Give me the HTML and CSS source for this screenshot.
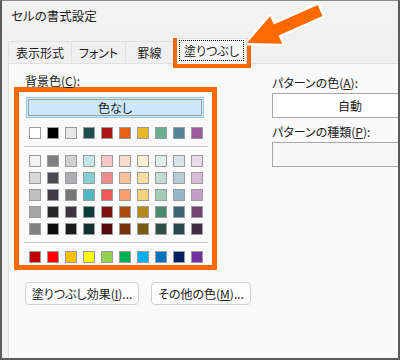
FILE: index.html
```html
<!DOCTYPE html>
<html lang="ja">
<head>
    <meta charset="UTF-8">
    <title>セルの書式設定</title>
    <link rel="stylesheet" href="styles.css">
</head>
<body>
    <div class="window">
        <div class="titlebar">セルの書式設定</div>

        <div class="tabstrip">
            <div class="tab tab-number">表示形式</div>
            <div class="tab tab-font">フォント</div>
            <div class="tab tab-border">罫線</div>
            <div class="tab tab-active"><span class="focus">塗りつぶし</span></div>
        </div>

        <div class="pane">
            <div class="col-left">
                <div class="label label-bg">背景色(<u>C</u>):</div>
                <div class="picker">
                    <div class="none-btn"><span>色なし</span></div>
                    <div class="swatch-row" id="themeRow"></div>
                    <div class="sep"></div>
                    <div class="swatch-grid" id="tintGrid"></div>
                    <div class="sep"></div>
                    <div class="swatch-row" id="standardRow"></div>
                </div>
                <div class="buttons">
                    <button class="btn btn-effect">塗りつぶし効果(<u>I</u>)...</button>
                    <button class="btn btn-more">その他の色(<u>M</u>)...</button>
                </div>
            </div>

            <div class="col-right">
                <div class="label">パターンの色(<u>A</u>):</div>
                <div class="combo">自動</div>
                <div class="label label-second">パターンの種類(<u>P</u>):</div>
                <div class="combo combo-empty"></div>
            </div>
        </div>
    </div>

    <!-- annotation -->
    <div class="callout"></div>
    <svg class="arrow" width="400" height="80" viewBox="0 0 400 80">
        <polygon points="247,43 282.3,43.7 278.6,35.5 322.5,15.9 317.7,4.9 273.8,24.5 270.1,16.3"
                 fill="#ff6a00" stroke="#ffffff" stroke-width="5" stroke-linejoin="round" paint-order="stroke"/>
    </svg>

    <script>
        const theme = ['#ffffff', '#000000', '#e8e8e8', '#1d4d4d', '#ad1515', '#eb6015', '#e8b828', '#6aaf90', '#528399', '#9b5a9c'];
        const tints = [
            ['#f2f2f2', '#7f7f7f', '#d0d0d0', '#c4e6e6', '#f7c7c7', '#fbdccc', '#faf0d3', '#e0eee8', '#dae5eb', '#ebdceb'],
            ['#d8d8d8', '#4a4a50', '#aeaeb2', '#85cfd3', '#f08c8c', '#f9c19e', '#f5e0a2', '#c4ddd2', '#b9cdd8', '#d8bcd8'],
            ['#bfbfbf', '#403b45', '#767676', '#4fb9c3', '#ee5a5a', '#f8a070', '#f0d27a', '#a2cbb8', '#94b5c8', '#c59cc6'],
            ['#a6a6a6', '#262626', '#3b3640', '#0e3a3c', '#7e1010', '#ad4b0e', '#b48a1c', '#4c8a6c', '#3c6378', '#744476'],
            ['#808080', '#0d0d0d', '#1a1a1a', '#13302f', '#560a0a', '#773208', '#775c12', '#2f4f46', '#284a4d', '#3d2f40']
        ];
        const standard = ['#c00000', '#ff0000', '#ffc000', '#ffff00', '#92d050', '#00b050', '#00b0f0', '#0070c0', '#002060', '#7030a0'];

        function fillRow(row, colors) {
            colors.forEach(c => {
                const s = document.createElement('span');
                s.className = 'swatch';
                s.style.background = c;
                row.appendChild(s);
            });
        }

        fillRow(document.getElementById('themeRow'), theme);
        const grid = document.getElementById('tintGrid');
        tints.forEach(colors => {
            const row = document.createElement('div');
            row.className = 'swatch-row';
            fillRow(row, colors);
            grid.appendChild(row);
        });
        fillRow(document.getElementById('standardRow'), standard);
    </script>
</body>
</html>
```

FILE: styles.css
```css
body {
    margin: 0;
    font-family: "Noto Sans CJK JP", "Noto Sans", sans-serif;
    font-feature-settings: "palt";
    font-size: 12px;
    color: #1b1b1b;
}
u {
    text-decoration-thickness: 1px;
    text-underline-offset: 1px;
}
.window {
    width: 400px;
    height: 360px;
    box-sizing: border-box;
    border: 2px solid #5b5b5b;
    border-top: 1px solid #8a8a8a;
    background: #f0f0f0;
    display: flex;
    flex-direction: column;
    overflow: hidden;
}
.titlebar {
    height: 30px;
    line-height: 29px;
    padding-left: 9px;
    background: #f3f3f3;
    font-size: 12.5px;
}

/* tabs */
.tabstrip {
    display: flex;
    align-items: flex-end;
    height: 22px;
    padding: 10px 0 0 6px;
}
.tab {
    height: 22px;
    box-sizing: border-box;
    border: 1px solid #e0e0e0;
    border-bottom: none;
    line-height: 21px;
    text-align: center;
}
.tab + .tab { border-left: none; }
.tab-number { width: 64px; }
.tab-font { width: 54px; }
.tab-border { width: 48px; }
.tab-active {
    position: relative;
    z-index: 1;
    width: 70px;
    height: 26px;
    margin: 0 0 -1px 3px;
    border-left: 1px solid #e0e0e0;
    background: #fafafa;
    line-height: 24px;
}
.focus {
    outline: 1px dotted #000;
    outline-offset: 0;
    padding: 1px 4px;
}

/* page */
.pane {
    flex: 1;
    display: flex;
    margin-left: 6px;
    background: #fafafa;
    border-top: 1px solid #e0e0e0;
    border-left: 1px solid #e0e0e0;
}
.label {
    line-height: 14px;
}
.col-left {
    flex-shrink: 0;
    width: 203px;
    margin-left: 5px;
    padding-top: 10px;
}
.label-bg {
    padding-left: 11px;
    line-height: 13px;
}
.picker {
    width: 203px;
    box-sizing: border-box;
    border: 5px solid #ff6a00;
    padding: 5px 8px 2px 7px;
}
.none-btn {
    height: 21px;
    box-sizing: border-box;
    border: 1px solid #99c9f0;
    padding: 1px;
    background: #cce8ff;
}
.none-btn span {
    display: block;
    height: 17px;
    box-sizing: border-box;
    border: 1px solid #a0a0a0;
    line-height: 15px;
    text-align: center;
}
.swatch-row {
    display: flex;
    gap: 6px;
    padding-left: 3px;
}
.none-btn + .swatch-row { margin-top: 9px; }
.swatch-grid {
    display: flex;
    flex-direction: column;
    gap: 5px;
}
.swatch {
    width: 12px;
    height: 12px;
    box-sizing: border-box;
    border: 1px solid #9c9c9c;
}
.sep {
    height: 1px;
    margin: 7px -4px 8px -2px;
    background: #c8c8c8;
}

.buttons {
    display: flex;
    gap: 12px;
    margin-top: 12px;
    padding-left: 11px;
}
.btn {
    flex-shrink: 0;
    height: 23px;
    box-sizing: border-box;
    padding: 0;
    border: 1px solid #d0d0d0;
    border-radius: 4px;
    background: #fdfdfd;
    font-family: inherit;
    font-feature-settings: "palt";
    font-size: 12px;
    color: #1b1b1b;
}
.btn-effect { width: 114px; }
.btn-more { width: 100px; }

.col-right {
    flex-shrink: 0;
    margin-left: 55px;
    padding-top: 12px;
}
.combo {
    width: 156px;
    height: 25px;
    box-sizing: border-box;
    margin-top: 3px;
    border: 1px solid #a8a8a8;
    background: #ffffff;
    line-height: 23px;
    text-align: center;
}
.combo-empty { background: #f6f6f6; }
.label-second { margin-top: 7px; }

/* annotation over the dialog */
.callout {
    position: absolute;
    left: 173px;
    top: 38px;
    width: 78px;
    height: 30px;
    box-sizing: border-box;
    border: 5px solid #ff6a00;
}
.arrow {
    position: absolute;
    left: 0;
    top: 0;
    pointer-events: none;
}
```
